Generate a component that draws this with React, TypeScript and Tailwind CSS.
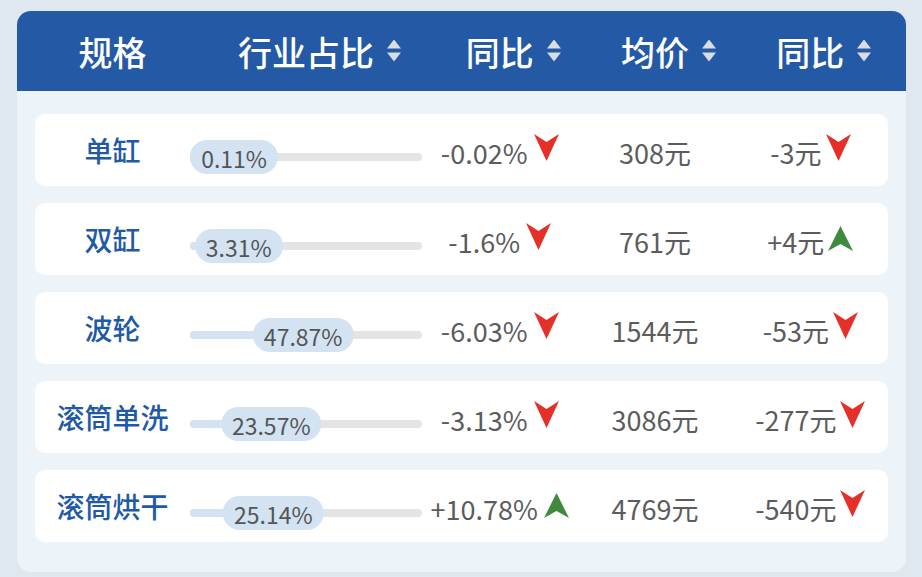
const rows = [
  { name: "单缸", share: 0.11, yoy: "-0.02%", yoyUp: false, price: "308元", diff: "-3元", diffUp: false },
  { name: "双缸", share: 3.31, yoy: "-1.6%", yoyUp: false, price: "761元", diff: "+4元", diffUp: true },
  { name: "波轮", share: 47.87, yoy: "-6.03%", yoyUp: false, price: "1544元", diff: "-53元", diffUp: false },
  { name: "滚筒单洗", share: 23.57, yoy: "-3.13%", yoyUp: false, price: "3086元", diff: "-277元", diffUp: false },
  { name: "滚筒烘干", share: 25.14, yoy: "+10.78%", yoyUp: true, price: "4769元", diff: "-540元", diffUp: false },
];

function SortIcon() {
  return (
    <svg className="absolute left-full top-1/2 ml-[13px] -translate-y-1/2" width="14" height="23" viewBox="0 0 14 23">
      <path d="M7 0 L14 9 L0 9 Z" fill="#d9dde3" />
      <path d="M0 13 L14 13 L7 22 Z" fill="#d9dde3" />
    </svg>
  );
}

function Arrow({ up }: { up: boolean }) {
  if (up) {
    return (
      <svg width="25" height="25" viewBox="0 0 25 25" className="shrink-0 -translate-y-[3px]">
        <path d="M12.5 0 L25 25 L12.5 18 L0 25 Z" fill="#3f8a3d" />
      </svg>
    );
  }
  return (
    <svg width="25" height="27" viewBox="0 0 25 27" className="shrink-0 -translate-y-[5px]">
      <path d="M0 0 L12.5 8 L25 0 L12.5 27 Z" fill="#e5302a" />
    </svg>
  );
}

function HeadCell({ label, sort }: { label: string; sort?: boolean }) {
  return (
    <div className="flex justify-center">
      <span className="relative">
        {label}
        {sort && <SortIcon />}
      </span>
    </div>
  );
}

function ShareBar({ pct }: { pct: number }) {
  return (
    <div className="relative mt-[14px] h-[34px] w-[232px]">
      <div className="absolute left-0 right-0 top-[13px] h-[8px] rounded-full bg-[#e4e4e4]" />
      <div className="absolute left-0 top-[13px] h-[8px] rounded-full bg-[#d3e3f2]" style={{ width: `${pct}%` }} />
      <div
        className="absolute top-0 h-[34px] whitespace-nowrap rounded-full bg-[#d3e3f2] px-[11px] text-[23px] leading-[36px] text-[#555]"
        style={{ left: `${pct}%`, transform: `translateX(-${pct}%)` }}
      >
        {pct.toFixed(2)}%
      </div>
    </div>
  );
}

export default function App() {
  return (
    <div
      className="h-[577px] w-[922px] overflow-hidden bg-[#dfe7ef] pt-[11px] pl-[17px]"
      style={{ fontFamily: '"Noto Sans CJK SC", "Noto Sans", sans-serif' }}
    >
      <div className="w-[889px] overflow-hidden rounded-[14px] bg-[#edf4f9]">
        <div className="grid h-[80px] grid-cols-[155px_232px_1fr_1fr_1fr] items-center bg-[#2359a5] px-[18px] text-[34px] font-medium text-white">
          <HeadCell label="规格" />
          <HeadCell label="行业占比" sort />
          <HeadCell label="同比" sort />
          <HeadCell label="均价" sort />
          <HeadCell label="同比" sort />
        </div>
        <div className="flex flex-col gap-[17.5px] px-[18px] pt-[23px] pb-[30px]">
          {rows.map((r) => (
            <div
              key={r.name}
              className="grid h-[71.5px] grid-cols-[155px_232px_1fr_1fr_1fr] items-center rounded-[10px] bg-white"
            >
              <div className="text-center text-[28px] font-medium text-[#1f5aa5]">{r.name}</div>
              <ShareBar pct={r.share} />
              <div className="flex items-center justify-center gap-[6px] pt-[6px] text-[27px] text-[#5c5c5c]">
                <span>{r.yoy}</span>
                <Arrow up={r.yoyUp} />
              </div>
              <div className="pt-[6px] text-center text-[27px] text-[#5c5c5c]">{r.price}</div>
              <div className="flex items-center justify-center gap-[4px] pt-[6px] text-[27px] text-[#5c5c5c]">
                <span>{r.diff}</span>
                <Arrow up={r.diffUp} />
              </div>
            </div>
          ))}
        </div>
      </div>
    </div>
  );
}
